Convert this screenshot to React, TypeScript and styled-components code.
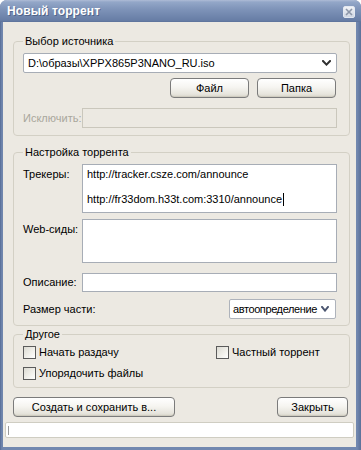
import React from 'react';
import styled, { createGlobalStyle } from 'styled-components';

const GlobalStyle = createGlobalStyle`
  html, body {
    margin: 0;
    padding: 0;
    background: #ffffff;
  }
  body {
    font-family: "Liberation Sans", Arial, sans-serif;
    font-size: 11px;
    color: #000;
  }
  * {
    box-sizing: border-box;
  }
`;

const Chevron = ({ size = 9, color = '#303030' }: { size?: number; color?: string }) => (
  <svg width={size} height={6} viewBox={`0 0 ${size} 6`}>
    <path
      d={`M1 1 L${size / 2} 4.6 L${size - 1} 1`}
      fill="none"
      stroke={color}
      strokeWidth={2}
      strokeLinecap="square"
    />
  </svg>
);

export default function App() {
  return (
    <>
      <GlobalStyle />
      <Window>
        <TitleBar>
          <Title>Новый торрент</Title>
          <CloseButton>
            <svg width="8" height="8" viewBox="0 0 8 8">
              <path d="M1 1 L7 7 M7 1 L1 7" stroke="#8c96a8" strokeWidth="1.6" />
            </svg>
          </CloseButton>
        </TitleBar>
        <Client>
          <Group>
            <Legend>Выбор источника</Legend>
            <Combo>
              <span>D:\образы\XPPX865P3NANO_RU.iso</span>
              <Chevron />
            </Combo>
            <ButtonRow>
              <Button $width={79}>Файл</Button>
              <Button $width={79}>Папка</Button>
            </ButtonRow>
            <FieldRow $top={10}>
              <Label $disabled>Исключить:</Label>
              <Input $height={20} $disabled />
            </FieldRow>
          </Group>

          <Group $top={10} $bottom={6}>
            <Legend>Настройка торрента</Legend>
            <FieldRow $top={0}>
              <Label $top>Трекеры:</Label>
              <TextBox $height={49}>
                <Line>http://tracker.csze.com/announce</Line>
                <Line>&nbsp;</Line>
                <Line>
                  http://fr33dom.h33t.com:3310/announce
                  <Caret />
                </Line>
              </TextBox>
            </FieldRow>
            <FieldRow $top={6}>
              <Label $top>Web-сиды:</Label>
              <TextBox $height={44} />
            </FieldRow>
            <FieldRow $top={10}>
              <Label>Описание:</Label>
              <Input $height={19} />
            </FieldRow>
            <SplitRow>
              <Label>Размер части:</Label>
              <Select>
                <SelectText>автоопределение</SelectText>
                <Chevron size={8} color="#4c5670" />
              </Select>
            </SplitRow>
          </Group>

          <Group $top={2} $bottom={7}>
            <Legend>Другое</Legend>
            <Options>
              <Option>
                <CheckBox />
                Начать раздачу
              </Option>
              <Option>
                <CheckBox />
                Частный торрент
              </Option>
              <Option>
                <CheckBox />
                Упорядочить файлы
              </Option>
            </Options>
          </Group>

          <Footer>
            <Button $width={162}>Создать и сохранить в...</Button>
            <Button $width={71}>Закрыть</Button>
          </Footer>

          <StatusBox>
            <StatusCaret />
          </StatusBox>
        </Client>
      </Window>
    </>
  );
}

const Window = styled.div`
  width: 361px;
  height: 450px;
  display: flex;
  flex-direction: column;
  background: linear-gradient(90deg, #4f6590 0, #6a80a8 1px, #7288af 3px, #7288af calc(100% - 4px), #5b7099 100%);
  border-radius: 7px 7px 0 0;
  overflow: hidden;
`;

const TitleBar = styled.div`
  height: 22px;
  flex: none;
  display: flex;
  align-items: center;
  justify-content: space-between;
  padding: 0 6px 0 7px;
  background: linear-gradient(#aebcd6 0, #93a7c8 2px, #7f94b9 9px, #7086ad 16px, #667ca4 21px, #5a6f97 22px);
`;

const Title = styled.span`
  color: #ffffff;
  font-weight: bold;
  font-size: 12px;
  letter-spacing: 0.1px;
  text-shadow: 1px 1px 0 rgba(40, 55, 90, 0.45);
`;

const CloseButton = styled.div`
  width: 12px;
  height: 12px;
  margin-top: 1px;
  display: flex;
  align-items: center;
  justify-content: center;
  border: 1px solid #e3e8f0;
  border-radius: 2px;
  background: linear-gradient(#f1f3f7, #cfd6e2);
`;

const Client = styled.div`
  flex: 1;
  display: flex;
  flex-direction: column;
  margin: 0 5px 3px 3px;
  padding-top: 13px;
  background: #ece9e2;
`;

const Group = styled.fieldset<{ $top?: number; $bottom?: number }>`
  margin: ${({ $top = 0 }) => $top}px 6px 0 10px;
  padding: 5px 12px ${({ $bottom = 7 }) => $bottom}px 9px;
  min-width: 0;
  border: 1px solid #d3d0c5;
  border-radius: 4px;
  display: flex;
  flex-direction: column;
`;

const Legend = styled.legend`
  padding: 0 2px;
  margin: 0;
  font-size: 11px;
  line-height: 13px;
  color: #000;
`;

const Combo = styled.div`
  height: 20px;
  display: flex;
  align-items: center;
  justify-content: space-between;
  padding: 0 5px 0 4px;
  background: #ffffff;
  border: 1px solid #a7adb6;
  border-radius: 2px;
`;

const ButtonRow = styled.div`
  display: flex;
  justify-content: flex-end;
  gap: 8px;
  margin-top: 5px;
  padding-right: 1px;
`;

const Button = styled.button<{ $width: number }>`
  width: ${({ $width }) => $width}px;
  height: 20px;
  padding: 0;
  font: 11px "Liberation Sans", Arial, sans-serif;
  color: #000;
  border: 1px solid #7b7b7b;
  border-radius: 4px;
  background: linear-gradient(#ffffff 0, #f6f5f1 45%, #e6e4dc 85%, #d6d3c8 100%);
  box-shadow: inset 0 -1px 0 #cfccc0;
`;

const FieldRow = styled.div<{ $top: number }>`
  display: grid;
  grid-template-columns: 59px 1fr;
  margin-top: ${({ $top }) => $top}px;
`;

const Label = styled.span<{ $top?: boolean; $disabled?: boolean }>`
  align-self: ${({ $top }) => ($top ? 'start' : 'center')};
  padding-top: ${({ $top }) => ($top ? 4 : 0)}px;
  line-height: 13px;
  white-space: nowrap;
  color: ${({ $disabled }) => ($disabled ? '#a9a79c' : '#000')};
`;

const Input = styled.div<{ $height: number; $disabled?: boolean }>`
  height: ${({ $height }) => $height}px;
  background: ${({ $disabled }) => ($disabled ? '#ece9e2' : '#ffffff')};
  border: 1px solid ${({ $disabled }) => ($disabled ? '#cac7bc' : '#a7adb6')};
`;

const TextBox = styled.div<{ $height: number }>`
  height: ${({ $height }) => $height}px;
  padding: 3px 4px;
  background: #ffffff;
  border: 1px solid #a7adb6;
  overflow: hidden;
`;

const Line = styled.div`
  line-height: 12.5px;
  white-space: nowrap;
  display: flex;
  align-items: center;
`;

const Caret = styled.span`
  display: inline-block;
  width: 1px;
  height: 13px;
  margin-left: 1px;
  background: #000;
`;

const SplitRow = styled.div`
  display: flex;
  align-items: center;
  justify-content: space-between;
  margin-top: 7px;
  padding-right: 1px;
`;

const Select = styled.div`
  width: 107px;
  height: 20px;
  display: flex;
  align-items: center;
  justify-content: space-between;
  padding: 0 6px 0 3px;
  background: #ffffff;
  border: 1px solid #aeb3bb;
  border-radius: 2px;
`;

const SelectText = styled.span`
  letter-spacing: -0.4px;
  white-space: nowrap;
`;

const Options = styled.div`
  display: grid;
  grid-template-columns: 193px 1fr;
  row-gap: 8px;
`;

const Option = styled.label`
  display: flex;
  align-items: center;
  gap: 3px;
  height: 13px;
  line-height: 13px;
  white-space: nowrap;
`;

const CheckBox = styled.span`
  width: 13px;
  height: 13px;
  flex: none;
  border: 1px solid #5b5b5b;
  background: linear-gradient(135deg, #dcdbd3 0, #f2f1ec 60%, #ffffff 100%);
`;

const Footer = styled.div`
  display: flex;
  justify-content: space-between;
  margin: 9px 8px 0 10px;
`;

const StatusBox = styled.div`
  height: 16px;
  margin: 5px 2px 0 2px;
  display: flex;
  align-items: center;
  padding-left: 2px;
  background: #ffffff;
  border: 1px solid #cfcdc2;
  border-radius: 2px;
`;

const StatusCaret = styled.span`
  width: 1px;
  height: 9px;
  background: #9a9a9a;
`;
